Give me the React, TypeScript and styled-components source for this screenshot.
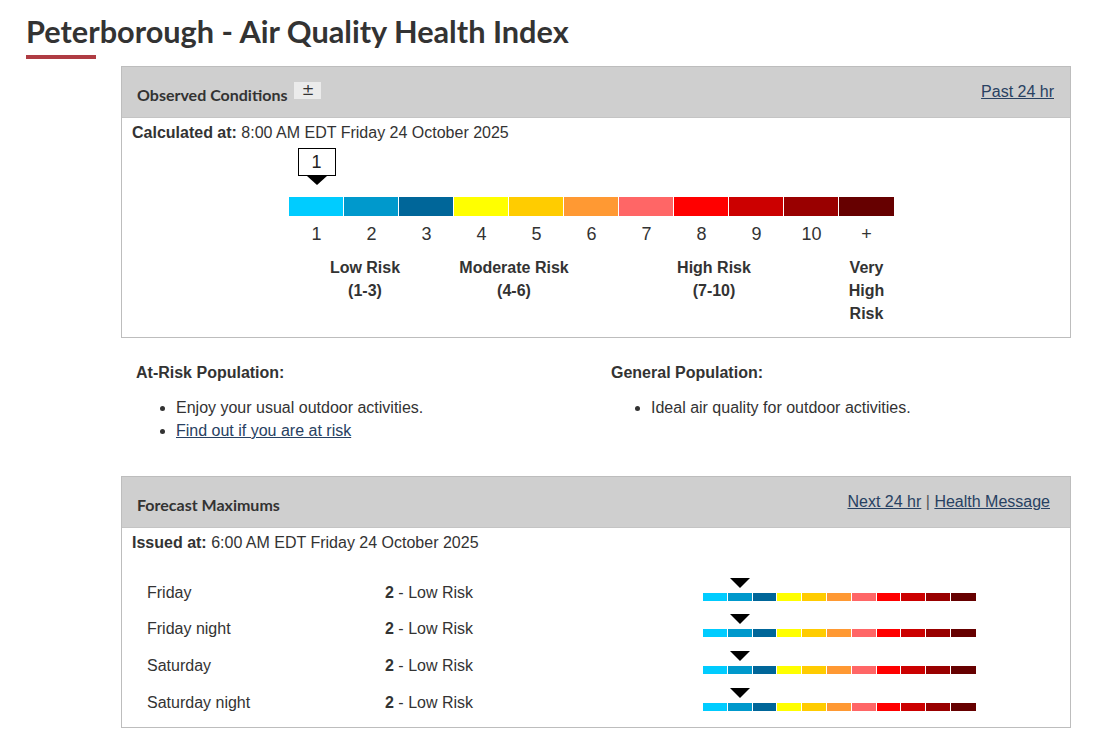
import React from "react";
import styled, { createGlobalStyle } from "styled-components";

const COLORS = [
  "#00ccff",
  "#0099cc",
  "#006699",
  "#ffff00",
  "#ffcc00",
  "#ff9933",
  "#ff6666",
  "#ff0000",
  "#cc0000",
  "#990000",
  "#660000",
];
const NUMBERS = ["1", "2", "3", "4", "5", "6", "7", "8", "9", "10", "+"];

const Global = createGlobalStyle`
  body {
    margin: 0;
    background: #fff;
    font-family: "Liberation Sans", Arial, sans-serif;
    color: #333;
  }
`;

const Page = styled.div`
  padding: 13px 0 0 26px;
`;

const Title = styled.h1`
  margin: 0;
  font-family: Lato, "Liberation Sans", sans-serif;
  font-weight: 700;
  font-size: 30.7px;
  line-height: 38px;
  color: #333;
  &::after {
    content: "";
    display: block;
    width: 70px;
    height: 4px;
    margin-top: 4px;
    background: #af3c43;
  }
`;

const Content = styled.div`
  margin-left: 95px;
  width: 950px;
`;

const Panel = styled.section<{ $top: number }>`
  box-sizing: border-box;
  width: 950px;
  margin-top: ${(p) => p.$top}px;
  border: 1px solid #bdbdbd;
`;

const PanelHeader = styled.div`
  height: 51px;
  box-sizing: border-box;
  border-bottom: 1px solid #c4c4c4;
  background: #cfcfcf;
  display: flex;
  align-items: center;
  justify-content: space-between;
  padding-left: 15px;
`;

const HeaderTitle = styled.h2`
  margin: 0;
  padding-top: 4px;
  font-family: Lato, "Liberation Sans", sans-serif;
  font-weight: 700;
  font-size: 16px;
  color: #333;
  display: flex;
  align-items: center;
`;

const ToggleChip = styled.span`
  display: inline-flex;
  align-items: center;
  justify-content: center;
  width: 27px;
  height: 17px;
  margin-left: 7px;
  margin-top: -7px;
  background: #ebebeb;
  font-family: "DejaVu Sans", "Liberation Sans", sans-serif;
  font-weight: 400;
  font-size: 15px;
  line-height: 17px;
  color: #333;
`;

const HeaderLinks = styled.div<{ $inset: number }>`
  padding-right: ${(p) => p.$inset}px;
  font-size: 16px;
  color: #555;
`;

const Link = styled.a`
  color: #284162;
  text-decoration: underline;
  cursor: pointer;
`;

const PanelBody = styled.div<{ $bottom: number }>`
  padding: 6px 10px ${(p) => p.$bottom}px 10px;
`;

const Stamp = styled.div`
  font-size: 16px;
  line-height: 18px;
  b {
    font-weight: 700;
  }
`;

const Scale = styled.div`
  margin: 6px 0 0 157px;
  width: 605px;
`;

const Cells = styled.div<{ $cell: number }>`
  display: grid;
  grid-template-columns: repeat(11, ${(p) => p.$cell}px);
`;

const MarkerCell = styled.div`
  height: 39px;
  display: flex;
  flex-direction: column;
  align-items: center;
`;

const MarkerBox = styled.div`
  box-sizing: border-box;
  width: 38px;
  height: 28px;
  border: 1px solid #000;
  background: #fff;
  font-size: 18px;
  line-height: 26px;
  text-align: center;
  color: #222;
`;

const Arrow = styled.div<{ $w: number; $h: number }>`
  width: 0;
  height: 0;
  border-left: ${(p) => p.$w / 2}px solid transparent;
  border-right: ${(p) => p.$w / 2}px solid transparent;
  border-top: ${(p) => p.$h}px solid #000;
`;

const Segment = styled.div<{ $color: string; $h: number; $last: boolean }>`
  height: ${(p) => p.$h}px;
  background: ${(p) => p.$color};
  border-right: ${(p) => (p.$last ? "none" : "1px solid #fff")};
`;

const BigBar = styled(Cells)`
  margin-top: 10px;
`;

const Numbers = styled(Cells)`
  margin-top: 8px;
  font-size: 18px;
  line-height: 20px;
  text-align: center;
  color: #333;
`;

const RiskLabels = styled.div`
  display: grid;
  grid-template-columns: 152px 146px 254px 51px;
  margin-top: 12px;
  font-weight: 700;
  font-size: 16px;
  line-height: 23px;
  text-align: center;
  color: #333;
`;

const RiskLabel = styled.div<{ $narrow?: boolean }>`
  padding: ${(p) => (p.$narrow ? "0 6px" : "0")};
`;

const Population = styled.div`
  display: grid;
  grid-template-columns: 475px 475px;
  margin-top: 25px;
`;

const PopCol = styled.div`
  padding-left: 15px;
`;

const PopTitle = styled.h3`
  margin: 0;
  font-size: 16px;
  line-height: 20px;
  font-weight: 700;
  color: #333;
`;

const PopList = styled.ul`
  margin: 13px 0 0;
  padding-left: 40px;
  font-size: 16px;
  line-height: 23px;
  color: #333;
`;

const Forecast = styled.div`
  margin-top: 20px;
`;

const ForecastRow = styled.div`
  display: grid;
  grid-template-columns: 238px 318px 273px;
  align-items: end;
  height: 36.67px;
  box-sizing: border-box;
  padding: 0 0 6px 15px;
  font-size: 16px;
  line-height: 20px;
`;

const MiniScale = styled.div`
  margin-bottom: 2px;
`;

const MiniArrowCell = styled.div`
  display: flex;
  justify-content: center;
  height: 15px;
`;

const Aqhi = ({ value }: { value: number }) => (
  <Scale>
    <Cells $cell={55}>
      {NUMBERS.map((n, i) => (
        <MarkerCell key={n}>
          {i === value - 1 && (
            <>
              <MarkerBox>{value}</MarkerBox>
              <Arrow $w={20} $h={9} />
            </>
          )}
        </MarkerCell>
      ))}
    </Cells>
    <BigBar $cell={55}>
      {COLORS.map((c, i) => (
        <Segment key={c} $color={c} $h={19} $last={i === COLORS.length - 1} />
      ))}
    </BigBar>
    <Numbers $cell={55}>
      {NUMBERS.map((n) => (
        <div key={n}>{n}</div>
      ))}
    </Numbers>
    <RiskLabels>
      <RiskLabel>
        Low Risk
        <br />
        (1-3)
      </RiskLabel>
      <RiskLabel>
        Moderate Risk
        <br />
        (4-6)
      </RiskLabel>
      <RiskLabel>
        High Risk
        <br />
        (7-10)
      </RiskLabel>
      <RiskLabel $narrow>Very High Risk</RiskLabel>
    </RiskLabels>
  </Scale>
);

const Mini = ({ value }: { value: number }) => (
  <MiniScale>
    <Cells $cell={24.8}>
      {COLORS.map((c, i) => (
        <MiniArrowCell key={c}>{i === value - 1 && <Arrow $w={20} $h={10} />}</MiniArrowCell>
      ))}
    </Cells>
    <Cells $cell={24.8}>
      {COLORS.map((c, i) => (
        <Segment key={c} $color={c} $h={8} $last={i === COLORS.length - 1} />
      ))}
    </Cells>
  </MiniScale>
);

const forecast = [
  { day: "Friday", value: 2 },
  { day: "Friday night", value: 2 },
  { day: "Saturday", value: 2 },
  { day: "Saturday night", value: 2 },
];

export default function App() {
  return (
    <>
      <Global />
      <Page>
        <Title>Peterborough - Air Quality Health Index</Title>
        <Content>
          <Panel $top={7}>
            <PanelHeader>
              <HeaderTitle>
                Observed Conditions
                <ToggleChip>±</ToggleChip>
              </HeaderTitle>
              <HeaderLinks $inset={16}>
                <Link>Past 24 hr</Link>
              </HeaderLinks>
            </PanelHeader>
            <PanelBody $bottom={12}>
              <Stamp>
                <b>Calculated at:</b> 8:00 AM EDT Friday 24 October 2025
              </Stamp>
              <Aqhi value={1} />
            </PanelBody>
          </Panel>

          <Population>
            <PopCol>
              <PopTitle>At-Risk Population:</PopTitle>
              <PopList>
                <li>Enjoy your usual outdoor activities.</li>
                <li>
                  <Link>Find out if you are at risk</Link>
                </li>
              </PopList>
            </PopCol>
            <PopCol>
              <PopTitle>General Population:</PopTitle>
              <PopList>
                <li>Ideal air quality for outdoor activities.</li>
              </PopList>
            </PopCol>
          </Population>

          <Panel $top={34}>
            <PanelHeader>
              <HeaderTitle>Forecast Maximums</HeaderTitle>
              <HeaderLinks $inset={20}>
                <Link>Next 24 hr</Link> | <Link>Health Message</Link>
              </HeaderLinks>
            </PanelHeader>
            <PanelBody $bottom={8}>
              <Stamp>
                <b>Issued at:</b> 6:00 AM EDT Friday 24 October 2025
              </Stamp>
              <Forecast>
                {forecast.map((f) => (
                  <ForecastRow key={f.day}>
                    <div>{f.day}</div>
                    <div>
                      <b>{f.value}</b> - Low Risk
                    </div>
                    <Mini value={f.value} />
                  </ForecastRow>
                ))}
              </Forecast>
            </PanelBody>
          </Panel>
        </Content>
      </Page>
    </>
  );
}
